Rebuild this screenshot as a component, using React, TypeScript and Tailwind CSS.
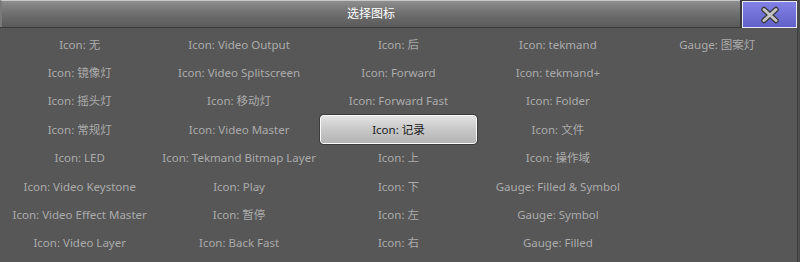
import React from "react";

const rows: string[][] = [
  ["Icon: 无", "Icon: Video Output", "Icon: 后", "Icon: tekmand", "Gauge: 图案灯"],
  ["Icon: 镜像灯", "Icon: Video Splitscreen", "Icon: Forward", "Icon: tekmand+", ""],
  ["Icon: 摇头灯", "Icon: 移动灯", "Icon: Forward Fast", "Icon: Folder", ""],
  ["Icon: 常规灯", "Icon: Video Master", "Icon: 记录", "Icon: 文件", ""],
  ["Icon: LED", "Icon: Tekmand Bitmap Layer", "Icon: 上", "Icon: 操作域", ""],
  ["Icon: Video Keystone", "Icon: Play", "Icon: 下", "Gauge: Filled & Symbol", ""],
  ["Icon: Video Effect Master", "Icon: 暂停", "Icon: 左", "Gauge: Symbol", ""],
  ["Icon: Video Layer", "Icon: Back Fast", "Icon: 右", "Gauge: Filled", ""],
];

const selected = "Icon: 记录";

function CloseIcon() {
  return (
    <svg width="22" height="18" viewBox="0 0 22 18">
      <path
        d="M5 3.5 L17 14.5 M17 3.5 L5 14.5"
        stroke="#3a3a3a"
        strokeWidth="5.5"
        strokeLinecap="round"
      />
      <path
        d="M5 3.5 L17 14.5 M17 3.5 L5 14.5"
        stroke="#c4c4c4"
        strokeWidth="3"
        strokeLinecap="round"
      />
    </svg>
  );
}

export default function App() {
  return (
    <div
      className="w-[800px] h-[262px] bg-[#575757] overflow-hidden flex flex-col"
      style={{ fontFamily: '"Noto Sans", "Noto Sans CJK SC", sans-serif' }}
    >
      {/* title bar */}
      <div className="flex h-[28px] shrink-0 bg-[#3a3a3a]">
        <div className="flex-1 h-[27px] flex items-center justify-center border-t border-[#c8c8c8] border-l-2 border-l-[#7a7a7a] bg-gradient-to-b from-[#8e8e8e] via-[#6e6e6e] to-[#5a5a5a] text-[12px] text-white">
          选择图标
        </div>
        <div className="w-[2px] bg-[#3a3a3a]" />
        <div className="w-[55px] h-[27px] mt-[1px] flex items-center justify-center border border-[#e8e8f8] bg-gradient-to-b from-[#8282e6] to-[#6060c8]">
          <CloseIcon />
        </div>
        <div className="w-[3px] bg-[#4a4a4a]" />
      </div>

      {/* icon grid */}
      <div className="flex flex-1">
        <div className="w-[797px] pt-[2px] grid grid-cols-5 auto-rows-[28.4px]">
          {rows.flat().map((label, i) =>
            label === selected ? (
              <div key={i} className="flex items-center justify-center px-[1px]">
                <div className="w-full h-full flex items-center justify-center rounded-[3px] border border-[#fafafa] outline outline-1 outline-[#3c3c3c] bg-gradient-to-b from-[#e2e2e2] via-[#c8c8c8] to-[#b4b4b4] text-[11.5px] text-[#1a1a1a]">
                  {label}
                </div>
              </div>
            ) : (
              <div
                key={i}
                className="flex items-center justify-center text-[11.5px] text-[#ababab] whitespace-nowrap"
              >
                {label}
              </div>
            )
          )}
        </div>
        <div className="w-[1px] bg-[#3c3c3c]" />
        <div className="w-[2px] bg-[#4e4e4e]" />
      </div>
    </div>
  );
}
